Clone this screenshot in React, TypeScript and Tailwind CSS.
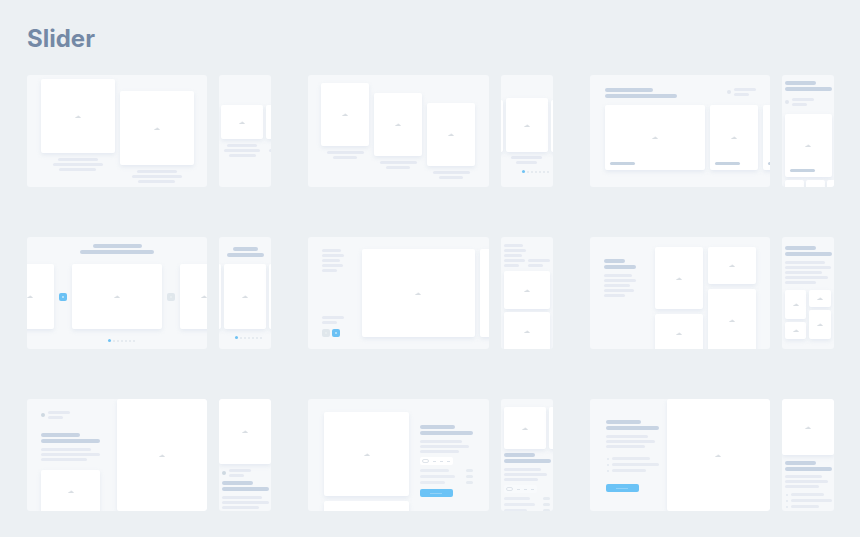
import type { ReactNode } from "react";
import clsx from "clsx";

function ImageIcon() {
  return (
    <svg width="6" height="3" viewBox="0 0 6 3" fill="#d9dee3" aria-hidden="true">
      <path d="M0 3 L1.2 1.5 L1.9 1.9 L3.1 0.3 L4.1 1.5 L4.7 1.2 L6 3 Z" />
    </svg>
  );
}

function Card({ className, label = false, empty = false }: { className?: string; label?: boolean; empty?: boolean }) {
  return (
    <div
      className={clsx(
        "relative flex shrink-0 items-center justify-center rounded-[2px] bg-white shadow-[0_2px_4px_rgba(190,202,222,0.3)]",
        className
      )}
    >
      {!empty && <ImageIcon />}
      {label && <span className="absolute bottom-[5px] left-[5px] h-[3px] w-[25px] rounded-full bg-[#c6d3e1]" />}
    </div>
  );
}

function Title({ widths, className }: { widths: string[]; className?: string }) {
  return (
    <div className={clsx("flex flex-col gap-[2px]", className)}>
      {widths.map((w, i) => (
        <div key={i} className={clsx("h-1 rounded-full bg-[#c8d4e3]", w)} />
      ))}
    </div>
  );
}

function Lines({ widths, className }: { widths: string[]; className?: string }) {
  return (
    <div className={clsx("flex flex-col gap-[2px]", className)}>
      {widths.map((w, i) => (
        <div key={i} className={clsx("h-[3px] shrink-0 rounded-full bg-[#e6eaf2]", w)} />
      ))}
    </div>
  );
}

function Author({ className, dark = false }: { className?: string; dark?: boolean }) {
  return (
    <div className={clsx("flex items-center gap-[3px]", className)}>
      <span className={clsx("size-1 rounded-full", dark ? "bg-[#ced9e1]" : "bg-[#e2e7ee]")} />
      <Lines widths={["w-[22px]", "w-[15px]"]} />
    </div>
  );
}

function Dots({ className }: { className?: string }) {
  return (
    <div className={clsx("flex items-center gap-[2px]", className)}>
      <span className="size-[3px] rounded-full bg-[#6fc2f3]" />
      {[1, 2, 3, 4, 5, 6].map((n) => (
        <span key={n} className="size-[2px] rounded-full bg-[#e1e7ed]" />
      ))}
    </div>
  );
}

function NavButton({ active = false, label }: { active?: boolean; label: string }) {
  return (
    <button
      type="button"
      aria-label={label}
      className={clsx(
        "flex size-2 shrink-0 items-center justify-center rounded-[2px]",
        active ? "bg-[#6bc1f4]" : "bg-[#e0e7ec]"
      )}
    >
      <span className={clsx("size-[2px] rounded-full", active ? "bg-[#c3e7fb]" : "bg-[#eaeff2]")} />
    </button>
  );
}

function ActionButton({ className }: { className?: string }) {
  return (
    <button
      type="button"
      aria-label="Action"
      className={clsx("flex h-2 w-[33px] items-center justify-center rounded-[2px] bg-[#6bc3f6]", className)}
    >
      <span className="h-px w-3 bg-[#92d2f8]" />
    </button>
  );
}

function Sizes({ className, muted = false }: { className?: string; muted?: boolean }) {
  return (
    <div
      className={clsx(
        "flex h-2 w-[33px] items-center gap-1 rounded-[2px] pl-[2px]",
        muted ? "bg-[#f8fafc]" : "bg-white",
        className
      )}
    >
      <span className="h-1 w-[7px] rounded-full border border-[#dfe4ea]" />
      <span className="h-px w-[3px] bg-[#dde3ea]" />
      <span className="h-px w-[3px] bg-[#dde3ea]" />
      <span className="h-px w-[3px] bg-[#dde3ea]" />
    </div>
  );
}

function Specs({ widths, className }: { widths: string[]; className?: string }) {
  return (
    <div className={clsx("flex flex-col gap-[3px]", className)}>
      {widths.map((w, i) => (
        <div key={i} className="flex justify-between">
          <span className={clsx("h-[3px] rounded-full bg-[#e8ecf3]", w)} />
          <span className="h-[3px] w-[7px] rounded-full bg-[#e6ebf1]" />
        </div>
      ))}
    </div>
  );
}

function Checks({ widths, className }: { widths: string[]; className?: string }) {
  return (
    <div className={clsx("flex flex-col gap-[3px]", className)}>
      {widths.map((w, i) => (
        <div key={i} className="flex items-center gap-[3px]">
          <span className="size-[2px] rounded-full bg-[#e2e8ef]" />
          <span className={clsx("h-[3px] rounded-full bg-[#e7ebf2]", w)} />
        </div>
      ))}
    </div>
  );
}

function Desktop({ children, className }: { children: ReactNode; className?: string }) {
  return (
    <div className={clsx("h-full min-w-0 flex-1 overflow-hidden rounded-[3px] bg-[#f6f8fa]", className)}>{children}</div>
  );
}

function Mobile({ children, className }: { children: ReactNode; className?: string }) {
  return (
    <div className={clsx("h-full w-[52px] shrink-0 overflow-hidden rounded-[3px] bg-[#f6f8fa]", className)}>
      {children}
    </div>
  );
}

function Layout({ children }: { children: ReactNode }) {
  return <section className="flex h-[112px] gap-3">{children}</section>;
}

function TwoCards() {
  return (
    <Layout>
      <Desktop className="flex justify-center gap-[5px]">
        <div className="pt-1">
          <Card className="size-[74px]" />
          <Lines className="mt-[5px] items-center" widths={["w-[40px]", "w-[50px]", "w-[37px]"]} />
        </div>
        <div className="pt-4">
          <Card className="size-[74px]" />
          <Lines className="mt-[5px] items-center" widths={["w-[40px]", "w-[50px]", "w-[37px]"]} />
        </div>
      </Desktop>
      <Mobile className="flex gap-[3px] pt-[30px] pl-[2px]">
        {[0, 1].map((n) => (
          <div key={n} className="shrink-0">
            <Card className="h-[34px] w-[42px]" />
            <Lines className="mt-[5px] items-center" widths={["w-[30px]", "w-[36px]", "w-[27px]"]} />
          </div>
        ))}
      </Mobile>
    </Layout>
  );
}

function Staircase() {
  return (
    <Layout>
      <Desktop className="flex justify-center gap-[5px]">
        {["pt-2", "pt-[18px]", "pt-[28px]"].map((offset) => (
          <div key={offset} className={offset}>
            <Card className="h-[63px] w-[48px]" />
            <Lines className="mt-[5px] items-center" widths={["w-[37px]", "w-[24px]"]} />
          </div>
        ))}
      </Desktop>
      <Mobile className="pt-[23px]">
        <div className="flex items-end justify-center gap-[3px]">
          <Card className="h-[52px] w-[42px]" />
          <Card className="h-[54px] w-[42px]" />
          <Card className="h-[52px] w-[42px]" />
        </div>
        <Lines className="mt-1 items-center" widths={["w-[31px]", "w-[21px]"]} />
        <Dots className="mt-[6px] justify-end pr-1" />
      </Mobile>
    </Layout>
  );
}

function LabelledCards() {
  return (
    <Layout>
      <Desktop className="pt-[13px] pl-[15px]">
        <div className="flex justify-between pr-[14px]">
          <Title widths={["w-[48px]", "w-[72px]"]} />
          <Author className="self-start" />
        </div>
        <div className="mt-[7px] flex gap-[5px]">
          <Card label className="h-[65px] w-[100px]" />
          <Card label className="h-[65px] w-[48px]" />
          <Card label className="h-[65px] w-[48px]" />
        </div>
      </Desktop>
      <Mobile className="flex flex-col pt-[6px] pl-[3px]">
        <Title widths={["w-[31px]", "w-[47px]"]} />
        <Author className="mt-[7px]" />
        <Card label className="mt-2 h-[63px] w-[47px]" />
        <div className="mt-[3px] flex gap-[2px]">
          <Card empty className="h-4 w-[19px]" />
          <Card empty className="h-4 w-[19px]" />
          <Card empty className="h-4 w-[19px]" />
        </div>
      </Mobile>
    </Layout>
  );
}

function Carousel() {
  return (
    <Layout>
      <Desktop className="pt-[7px]">
        <Title className="items-center" widths={["w-[49px]", "w-[74px]"]} />
        <div className="mt-[10px] flex items-center justify-center gap-[5px]">
          <Card className="h-[65px] w-[48px]" />
          <NavButton active label="Previous" />
          <Card className="h-[65px] w-[90px]" />
          <NavButton label="Next" />
          <Card className="h-[65px] w-[48px]" />
        </div>
        <Dots className="mt-[10px] justify-center pl-2" />
      </Desktop>
      <Mobile className="pt-[10px]">
        <Title className="items-center" widths={["w-[25px]", "w-[37px]"]} />
        <div className="mt-[7px] flex justify-center gap-[3px]">
          <Card className="h-[65px] w-[42px]" />
          <Card className="h-[65px] w-[42px]" />
          <Card className="h-[65px] w-[42px]" />
        </div>
        <Dots className="mt-[7px] justify-center pl-[7px]" />
      </Mobile>
    </Layout>
  );
}

function SideNav() {
  return (
    <Layout>
      <Desktop className="flex gap-[5px] py-3 pl-[14px]">
        <div className="mr-3 flex w-[22px] shrink-0 grow flex-col justify-between">
          <Lines widths={["w-[19px]", "w-[22px]", "w-[18px]", "w-[21px]", "w-[15px]"]} />
          <div>
            <Lines widths={["w-[22px]", "w-[15px]"]} />
            <div className="mt-[5px] flex gap-[2px]">
              <NavButton label="Previous" />
              <NavButton active label="Next" />
            </div>
          </div>
        </div>
        <Card className="h-[88px] w-[113px]" />
        <div className="w-[9px] shrink-0">
          <Card empty className="h-[88px] w-[113px]" />
        </div>
      </Desktop>
      <Mobile className="flex flex-col px-[3px] pt-[7px]">
        <Lines widths={["w-[19px]", "w-[22px]", "w-[18px]"]} />
        <div className="mt-[2px] flex gap-[3px]">
          <Lines widths={["w-[21px]", "w-[15px]"]} />
          <Lines widths={["w-[22px]", "w-[15px]"]} />
        </div>
        <Card className="mt-1 h-[38px]" />
        <Card className="mt-[3px] h-[38px]" />
      </Mobile>
    </Layout>
  );
}

function Masonry() {
  return (
    <Layout>
      <Desktop className="flex gap-[5px] pr-[14px] pl-[14px]">
        <div className="grow pt-[22px]">
          <Title widths={["w-[21px]", "w-[32px]"]} />
          <Lines
            className="mt-[5px]"
            widths={["w-[28px]", "w-[32px]", "w-[26px]", "w-[30px]", "w-[21px]"]}
          />
        </div>
        <div className="flex flex-col gap-[5px] pt-[10px]">
          <Card className="h-[62px] w-[48px]" />
          <Card className="h-[38px] w-[48px]" />
        </div>
        <div className="flex flex-col gap-[5px] pt-[10px]">
          <Card className="h-[37px] w-[48px]" />
          <Card className="h-[63px] w-[48px]" />
        </div>
      </Desktop>
      <Mobile className="px-[3px] pt-[9px]">
        <Title widths={["w-[31px]", "w-[47px]"]} />
        <Lines
          className="mt-[5px]"
          widths={["w-[40px]", "w-[46px]", "w-[37px]", "w-[43px]", "w-[31px]"]}
        />
        <div className="mt-[6px] flex gap-[3px]">
          <div className="flex flex-1 flex-col gap-[3px]">
            <Card className="h-[29px]" />
            <Card className="h-[17px]" />
          </div>
          <div className="flex flex-1 flex-col gap-[3px]">
            <Card className="h-[17px]" />
            <Card className="h-[29px]" />
          </div>
        </div>
      </Mobile>
    </Layout>
  );
}

function Testimonial() {
  return (
    <Layout>
      <Desktop className="flex">
        <div className="flex-1 pt-3 pl-[14px]">
          <Author dark />
          <Title className="mt-[14px]" widths={["w-[39px]", "w-[59px]"]} />
          <Lines className="mt-[5px]" widths={["w-[50px]", "w-[59px]", "w-[46px]"]} />
          <Card className="mt-[9px] h-[43px] w-[59px]" />
        </div>
        <Card className="h-full w-1/2" />
      </Desktop>
      <Mobile>
        <Card className="h-[65px]" />
        <div className="pl-[3px]">
          <Author dark className="mt-[5px]" />
          <Title className="mt-1" widths={["w-[31px]", "w-[47px]"]} />
          <Lines className="mt-[5px]" widths={["w-[40px]", "w-[47px]", "w-[37px]"]} />
        </div>
      </Mobile>
    </Layout>
  );
}

function Product() {
  return (
    <Layout>
      <Desktop className="flex justify-between pr-4 pl-4">
        <div className="flex flex-col gap-[5px] pt-[13px]">
          <Card className="h-[84px] w-[85px]" />
          <Card empty className="h-[84px] w-[85px]" />
        </div>
        <div className="w-[53px] pt-[26px]">
          <Title widths={["w-[35px]", "w-[53px]"]} />
          <Lines className="mt-[5px]" widths={["w-[42px]", "w-[49px]", "w-[39px]"]} />
          <Sizes className="mt-1" />
          <Specs className="mt-1" widths={["w-[29px]", "w-[35px]", "w-[25px]"]} />
          <ActionButton className="mt-[5px]" />
        </div>
      </Desktop>
      <Mobile className="px-[3px] pt-2">
        <div className="flex gap-[3px]">
          <Card className="size-[42px]" />
          <Card className="size-[42px]" />
        </div>
        <Title className="mt-1" widths={["w-[31px]", "w-[47px]"]} />
        <Lines className="mt-[5px]" widths={["w-[37px]", "w-[43px]", "w-[34px]"]} />
        <Sizes muted className="mt-1" />
        <Specs className="mt-1" widths={["w-[26px]", "w-[31px]", "w-[23px]"]} />
      </Mobile>
    </Layout>
  );
}

function Features() {
  return (
    <Layout>
      <Desktop className="flex">
        <div className="w-[77px] pt-[21px] pl-4">
          <Title widths={["w-[35px]", "w-[53px]"]} />
          <Lines className="mt-[5px]" widths={["w-[42px]", "w-[49px]", "w-[39px]"]} />
          <Checks className="mt-[9px] pl-px" widths={["w-[38px]", "w-[47px]", "w-[34px]"]} />
          <ActionButton className="mt-3" />
        </div>
        <Card className="h-full min-w-0 flex-1" />
      </Desktop>
      <Mobile>
        <Card className="h-[56px]" />
        <div className="pl-[3px]">
          <Title className="mt-[6px]" widths={["w-[31px]", "w-[47px]"]} />
          <Lines className="mt-1" widths={["w-[37px]", "w-[43px]", "w-[34px]"]} />
          <Checks className="mt-[5px] pl-px" widths={["w-[33px]", "w-[41px]", "w-[28px]"]} />
        </div>
      </Mobile>
    </Layout>
  );
}

export default function App() {
  return (
    <main className="min-h-screen bg-[#ecf0f3] pt-[23px] pr-[26px] pb-[26px] pl-[27px] font-['Inter',sans-serif]">
      <h1 className="text-2xl font-bold text-[#7489a6]">Slider</h1>
      <div className="mt-5 grid grid-cols-3 gap-x-[37px] gap-y-[50px]">
        <TwoCards />
        <Staircase />
        <LabelledCards />
        <Carousel />
        <SideNav />
        <Masonry />
        <Testimonial />
        <Product />
        <Features />
      </div>
    </main>
  );
}
